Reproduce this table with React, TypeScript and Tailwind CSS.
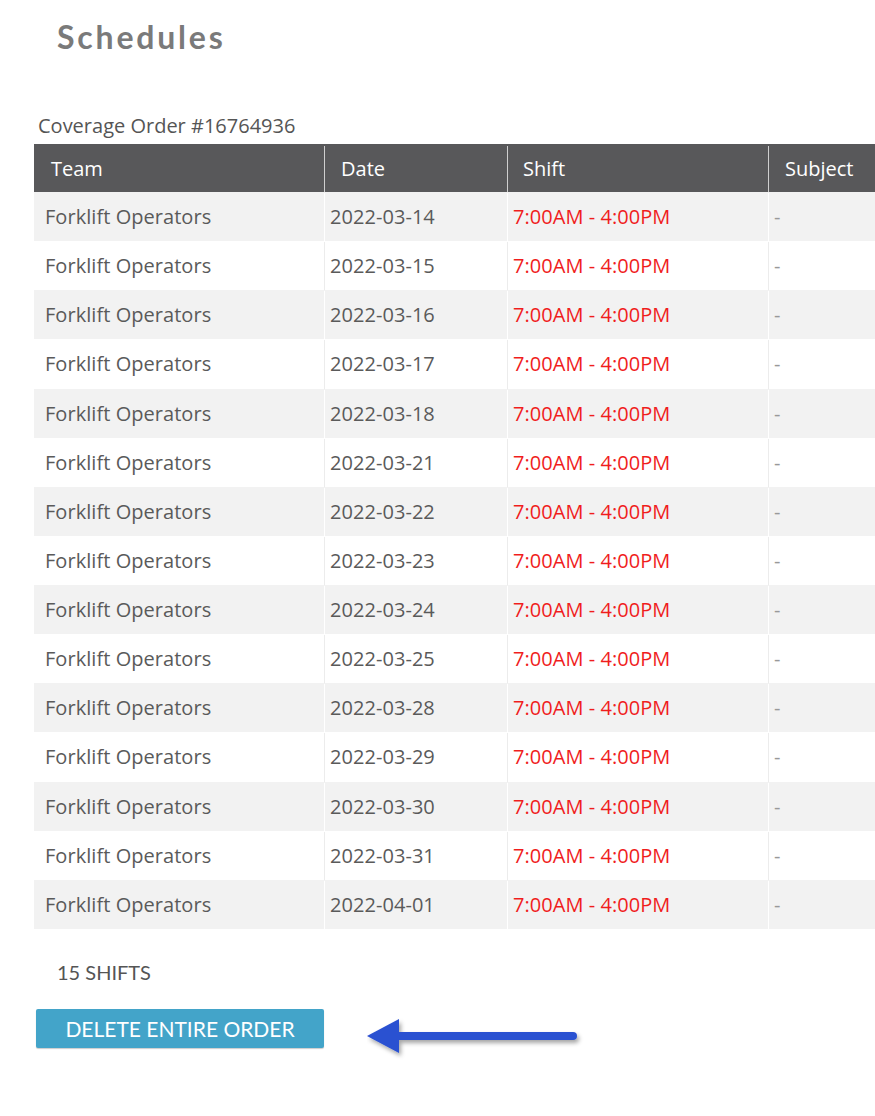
import React from 'react'

const dates = [
  '2022-03-14',
  '2022-03-15',
  '2022-03-16',
  '2022-03-17',
  '2022-03-18',
  '2022-03-21',
  '2022-03-22',
  '2022-03-23',
  '2022-03-24',
  '2022-03-25',
  '2022-03-28',
  '2022-03-29',
  '2022-03-30',
  '2022-03-31',
  '2022-04-01',
]

const cols = 'grid grid-cols-[291px_183px_261px_220px]'

export default function App() {
  return (
    <div className="w-[875px] h-[1116px] bg-white overflow-hidden font-['Open_Sans',sans-serif] text-[#5a5a5a]">
      {/* Title */}
      <h1 className="pl-[57px] pt-[13px] h-[108px] text-[32px] font-bold tracking-[2.8px] text-[#7a7a7a] font-['Lato',sans-serif]">
        Schedules
      </h1>

      <div className="pl-[34px]">
        <p className="pl-[4px] h-[36px] text-[20px] leading-[36px] text-[#555]">
          Coverage Order #16764936
        </p>

        {/* Table */}
        <div className="w-[960px]">
          <div className={`${cols} h-[48px] pt-[2px] bg-[#58585a] text-white text-[20px]`}>
            <div className="pl-[17px] flex items-center border-r border-[#cfcfcf]">Team</div>
            <div className="pl-[16px] flex items-center border-r border-[#cfcfcf]">Date</div>
            <div className="pl-[15px] flex items-center border-r border-[#cfcfcf]">Shift</div>
            <div className="pl-[16px] flex items-center">Subject</div>
          </div>
          {dates.map((d, i) => (
            <div
              key={d}
              className={`${cols} h-[49.13px] pt-[1px] text-[20px] tracking-[0.05px] ${i % 2 === 0 ? 'bg-[#f2f2f2]' : 'bg-white'}`}
            >
              <div className={`pl-[11px] flex items-center border-r ${i % 2 === 0 ? 'border-white' : 'border-[#ececec]'}`}>
                Forklift Operators
              </div>
              <div className={`pl-[5px] flex items-center border-r ${i % 2 === 0 ? 'border-white' : 'border-[#ececec]'}`}>
                {d}
              </div>
              <div className={`pl-[5px] flex items-center text-[#f01d1d] border-r ${i % 2 === 0 ? 'border-white' : 'border-[#ececec]'}`}>
                7:00AM - 4:00PM
              </div>
              <div className="pl-[5px] flex items-center text-[#999]">-</div>
            </div>
          ))}
        </div>

        <p className="pl-[23px] mt-[28px] text-[20px] text-[#555] font-['Lato',sans-serif]">15 SHIFTS</p>

        <div className="mt-[22px] flex items-start">
          <button className="ml-[2px] w-[288px] h-[39px] bg-[#43a4c9] text-white text-[21px] font-['Lato',sans-serif] rounded-[2px] shadow-[0_1px_1px_rgba(0,0,0,0.2)]">
            DELETE ENTIRE ORDER
          </button>
          <svg width="225" height="44" viewBox="0 0 225 44" className="ml-[43px] mt-[8px]">
            <defs>
              <filter id="sh" x="-10%" y="-40%" width="130%" height="190%">
                <feDropShadow dx="2" dy="3" stdDeviation="2" floodColor="#000" floodOpacity="0.35" />
              </filter>
            </defs>
            <g filter="url(#sh)">
              <line x1="30" y1="19" x2="206" y2="19" stroke="#2a51d1" strokeWidth="8" strokeLinecap="round" />
              <polygon points="0,19 32,2 32,36" fill="#2a51d1" />
            </g>
          </svg>
        </div>
      </div>
    </div>
  )
}
